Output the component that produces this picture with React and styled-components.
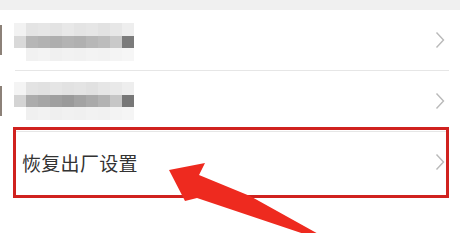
import React from "react";
import styled, { createGlobalStyle } from "styled-components";

const Global = createGlobalStyle`
  html, body { margin: 0; padding: 0; background: #ffffff; }
  body { font-family: "Noto Sans CJK SC", "Noto Sans", sans-serif; overflow: hidden; }
`;

const Page = styled.div`
  position: relative;
  width: 460px;
  height: 233px;
  background: #ffffff;
  overflow: hidden;
`;

const TopBand = styled.div`
  height: 10px;
  background: #f0f0f0;
`;

const Row = styled.div`
  height: 60px;
  display: flex;
  align-items: center;
  padding-left: ${(p) => p.$indent}px;
  padding-right: 15px;
`;

const Divider = styled.div`
  height: 1px;
  margin: 0 11px 0 15px;
  background: #e6e6e6;
`;

const EdgeMark = styled.div`
  width: 2px;
  height: 30px;
  background: #8c8178;
  margin-right: 12px;
`;

const Mosaic = styled.div`
  display: grid;
  grid-template-columns: repeat(10, 12px);
  grid-template-rows: 13px 12px 13px;
  margin-top: ${(p) => p.$shift}px;
`;

const Cell = styled.div`
  background: ${(p) => p.$c};
`;

const Label = styled.span`
  font-size: 19px;
  color: #333333;
  letter-spacing: 0.3px;
`;

const Spacer = styled.div`
  flex: 1;
`;

const Chevron = () => (
  <svg width="10" height="18" viewBox="0 0 10 18">
    <polyline points="1.5,1.5 8.5,9 1.5,16.5" fill="none" stroke="#b9b9b9" strokeWidth="1.4" />
  </svg>
);

const Highlight = styled.div`
  position: absolute;
  left: 13px;
  top: 127px;
  width: 430px;
  height: 65px;
  border: 3px solid #d0221f;
  pointer-events: none;
`;

const ArrowLayer = styled.svg`
  position: absolute;
  left: 0;
  top: 0;
  pointer-events: none;
`;

const mosaic1 = [
  ["#f2f2f2", "#e4e4e4", "#e6e6e6", "#e3e3e3", "#e8e8e8", "#e4e4e4", "#e6e6e6", "#e2e2e2", "#e7e7e7", "#eeeeee"],
  ["#d9d9d9", "#b6b6b6", "#b2b2b2", "#aeaeae", "#b3b3b3", "#b0b0b0", "#b7b7b7", "#bcbcbc", "#c9c9c9", "#7b7b7b"],
  ["#ffffff", "#f1f1f1", "#f3f3f3", "#f0f0f0", "#f2f2f2", "#f1f1f1", "#f3f3f3", "#f2f2f2", "#f4f4f4", "#f6f6f6"],
];

const mosaic2 = [
  ["#f4f4f4", "#e3e3e3", "#e1e1e1", "#e5e5e5", "#e2e2e2", "#e4e4e4", "#e1e1e1", "#e6e6e6", "#e9e9e9", "#eeeeee"],
  ["#d4d4d4", "#acacac", "#a6a6a6", "#9f9f9f", "#9a9a9a", "#a3a3a3", "#aaaaaa", "#b3b3b3", "#c6c6c6", "#777777"],
  ["#ffffff", "#f0f0f0", "#f2f2f2", "#efefef", "#f1f1f1", "#f0f0f0", "#f2f2f2", "#f1f1f1", "#f3f3f3", "#f5f5f5"],
];

const Blurred = ({ data, shift }) => (
  <Mosaic $shift={shift}>
    {data.flat().map((c, i) => (
      <Cell key={i} $c={c} />
    ))}
  </Mosaic>
);

export default function App() {
  return (
    <Page>
      <Global />
      <TopBand />
      <Row $indent={0}>
        <EdgeMark />
        <Blurred data={mosaic1} shift={4} />
        <Spacer />
        <Chevron />
      </Row>
      <Divider />
      <Row $indent={0}>
        <EdgeMark />
        <Blurred data={mosaic2} shift={0} />
        <Spacer />
        <Chevron />
      </Row>
      <Divider />
      <Row $indent={22}>
        <Label>恢复出厂设置</Label>
        <Spacer />
        <Chevron />
      </Row>
      <Highlight />
      <ArrowLayer width="460" height="233" viewBox="0 0 460 233">
        <polygon
          points="169,170 205,163 199,175 250,196 340,246 197,198 185,201"
          fill="#ee2a1f"
        />
      </ArrowLayer>
    </Page>
  );
}
